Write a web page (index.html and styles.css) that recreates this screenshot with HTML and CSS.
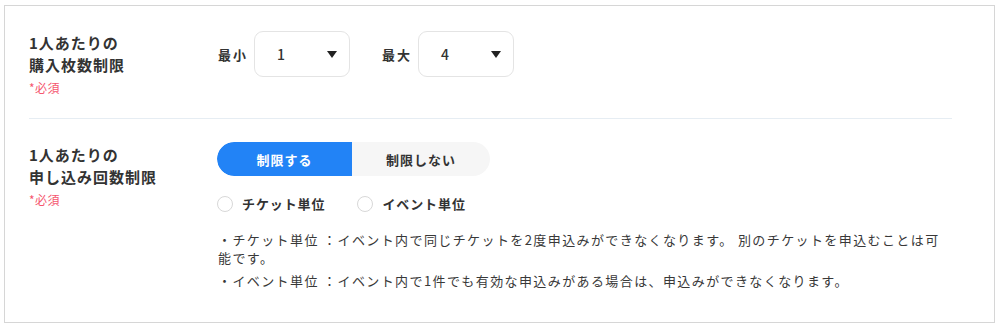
FILE: index.html
```html
<!DOCTYPE html>
<html lang="ja">
<head>
<meta charset="utf-8">
<link rel="stylesheet" href="styles.css">
</head>
<body>
<div class="panel">
  <div class="section">
    <div class="label">
      <div class="label-title">1人あたりの<br>購入枚数制限</div>
      <div class="required">*必須</div>
    </div>
    <div class="controls selects">
      <span class="sel-label">最小</span>
      <div class="select"><span class="sel-value">1</span><span class="caret"></span></div>
      <span class="sel-label second">最大</span>
      <div class="select"><span class="sel-value">4</span><span class="caret"></span></div>
    </div>
  </div>
  <div class="section last">
    <div class="label">
      <div class="label-title">1人あたりの<br>申し込み回数制限</div>
      <div class="required">*必須</div>
    </div>
    <div class="controls stack">
      <div class="toggle">
        <span class="seg active">制限する</span>
        <span class="seg">制限しない</span>
      </div>
      <div class="radios">
        <label class="radio"><span class="circle"></span>チケット単位</label>
        <label class="radio"><span class="circle"></span>イベント単位</label>
      </div>
      <div class="desc">
        <p>・チケット単位 ：イベント内で同じチケットを2度申込みができなくなります。 別のチケットを申込むことは可能です。</p>
        <p>・イベント単位 ：イベント内で1件でも有効な申込みがある場合は、申込みができなくなります。</p>
      </div>
    </div>
  </div>
</div>
</body>
</html>
```
FILE: styles.css
```css
* { box-sizing: border-box; }
body {
  margin: 0;
  background: #fff;
  font-family: "Noto Sans CJK JP", "Noto Sans", sans-serif;
  color: #333;
}
.panel {
  margin: 5px 0 0 4px;
  width: 991px;
  height: 318px;
  border: 1px solid #d6d6d6;
  padding: 0 42px 0 24px;
}
.section {
  display: flex;
  align-items: flex-start;
  padding: 26px 0 21px;
  border-bottom: 1px solid #e6edf3;
}
.section.last {
  border-bottom: none;
  padding-top: 25px;
}
.label {
  width: 189px;
  flex: none;
}
.label-title {
  font-size: 15px;
  font-weight: 700;
  line-height: 22px;
  letter-spacing: 1px;
  color: #333;
}
.required {
  margin-top: 3px;
  font-size: 12px;
  line-height: 18px;
  color: #f5566f;
  letter-spacing: 0.5px;
}
.controls.selects {
  display: flex;
  align-items: center;
  margin-top: -1px;
}
.sel-label {
  font-size: 13px;
  font-weight: 700;
  letter-spacing: 2px;
  margin-right: 6px;
}
.sel-label.second { margin-left: 32px; }
.select {
  width: 96px;
  height: 46px;
  border: 1px solid #e4e4e4;
  border-radius: 9px;
  display: flex;
  align-items: center;
  justify-content: space-between;
  padding: 0 12px 0 22px;
}
.sel-value {
  font-size: 14px;
  font-weight: 500;
  color: #333;
}
.caret {
  width: 0;
  height: 0;
  border-left: 5px solid transparent;
  border-right: 5px solid transparent;
  border-top: 7px solid #222;
}
.controls.stack {
  margin-top: -2px;
  flex: 1;
}
.toggle {
  display: flex;
  width: 273px;
  height: 34px;
  border-radius: 17px;
  background: #f6f6f6;
  overflow: hidden;
  margin-left: -1px;
}
.seg {
  display: flex;
  align-items: center;
  justify-content: center;
  font-size: 13px;
  font-weight: 700;
  letter-spacing: 1px;
  color: #333;
  width: 138px;
}
.seg.active {
  width: 135px;
  background: #2283f6;
  color: #fff;
  border-radius: 17px 0 0 17px;
}
.radios {
  display: flex;
  gap: 32px;
  margin-top: 18px;
  margin-left: -1px;
}
.radio {
  display: flex;
  align-items: center;
  font-size: 13px;
  font-weight: 700;
  letter-spacing: 0.9px;
  line-height: 20px;
  color: #333;
}
.circle {
  width: 16px;
  height: 16px;
  border: 1px solid #d8d8d8;
  border-radius: 50%;
  margin-right: 9px;
  background: #fff;
}
.desc {
  margin-top: 17px;
  width: 728px;
}
.desc p {
  margin: 0 0 5px;
  font-size: 13px;
  line-height: 18px;
  letter-spacing: 1.4px;
  color: #383838;
}
```
